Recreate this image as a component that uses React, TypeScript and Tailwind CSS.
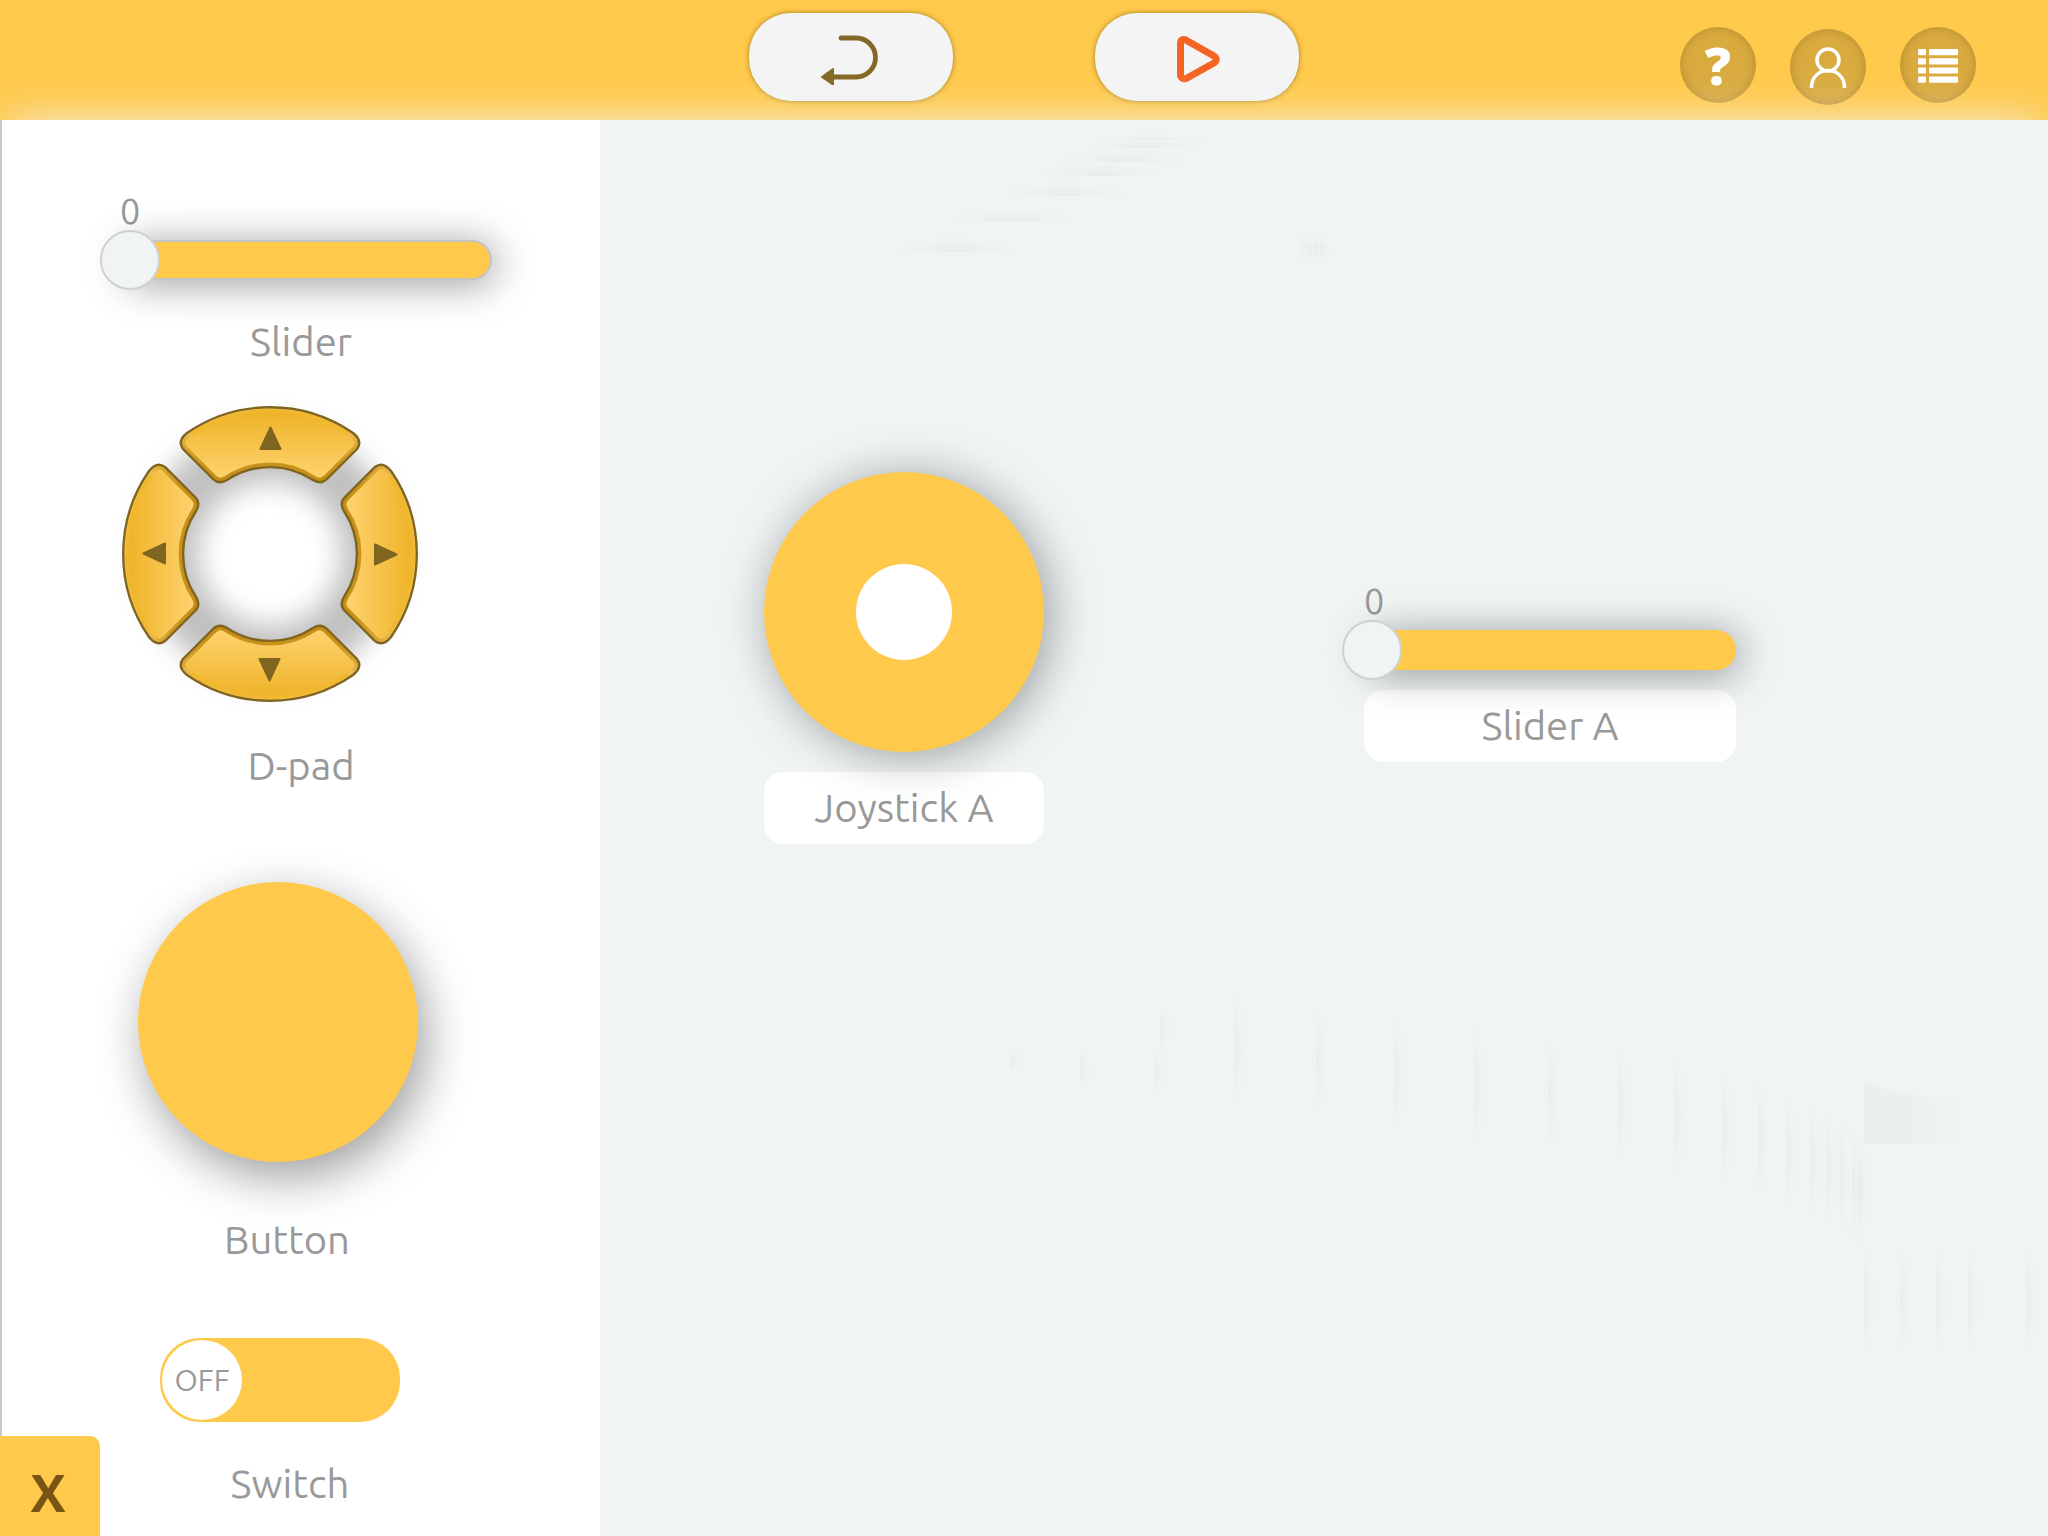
import { useState } from 'react';

interface SliderProps {
    id: string;
    outlined?: boolean;
}

interface DPadKeyProps {
    direction: 'Up' | 'Down' | 'Left' | 'Right';
}

// x, top, bottom of the faint vertical marks on the canvas
const verticalMarks = [
    [410, 930, 953],
    [480, 930, 967],
    [554, 930, 973],
    [560, 885, 936],
    [634, 873, 985],
    [716, 885, 997],
    [794, 897, 1013],
    [874, 905, 1025],
    [948, 916, 1030],
    [1018, 925, 1043],
    [1074, 935, 1055],
    [1122, 948, 1067],
    [1158, 960, 1075],
    [1186, 970, 1090],
    [1210, 983, 1097],
    [1226, 992, 1105],
    [1240, 1000, 1113],
    [1252, 1007, 1120],
    [1258, 1013, 1127],
    [1264, 1123, 1237],
    [1300, 1123, 1237],
    [1336, 1123, 1237],
    [1368, 1123, 1237],
    [1426, 1123, 1237],
    [700, 116, 142],
    [708, 116, 142],
    [714, 116, 142],
    [720, 118, 142],
];

// left, bottom, height of the horizontal ones
const horizontalMarks = [
    [493, 20, 5],
    [482, 28, 9],
    [462, 42, 14],
    [440, 56, 14],
    [404, 76, 14],
    [350, 102, 14],
    [294, 132, 14],
];

const keyPath = 'M7 27 A146.5 146.5 0 0 1 173 27 Q183 35 177 43 L147 73 Q141 79 133 74 A78 78 0 0 0 47 74 Q39 79 33 73 L3 43 Q-3 35 7 27Z';

const keyTransforms = {
    Up: undefined,
    Right: 'translate(77 0) rotate(90)',
    Down: 'translate(180 77) rotate(180)',
    Left: 'translate(0 180) rotate(-90)',
};

const DPadKey = ({ direction }: DPadKeyProps) => {
    const upright = direction === 'Up' || direction === 'Down';
    return (
        <button type="button" aria-label={direction} className="relative block">
            <svg className="block overflow-visible" width={upright ? 180 : 77} height={upright ? 77 : 180}>
                <defs>
                    <linearGradient id={`face${direction}`} x1="0" y1="0" x2="0" y2="1">
                        <stop offset="0.1" stopColor="#efb42a" />
                        <stop offset="1" stopColor="#ffd573" />
                    </linearGradient>
                    <linearGradient id={`rim${direction}`} x1="0" y1="0" x2="0" y2="1">
                        <stop offset="0.2" stopColor="#ffd36a" />
                        <stop offset="0.5" stopColor="#d9a838" />
                        <stop offset="0.75" stopColor="#c9941c" />
                        <stop offset="1" stopColor="#c48c14" />
                    </linearGradient>
                    <clipPath id={`clip${direction}`}>
                        <path d={keyPath} />
                    </clipPath>
                </defs>
                <g transform={keyTransforms[direction]}>
                    <g clipPath={`url(#clip${direction})`}>
                        <path d={keyPath} fill={`url(#face${direction})`} stroke={`url(#rim${direction})`} strokeWidth="9" />
                        <path d="M12 28 A143 143 0 0 1 168 28" fill="none" stroke="#f1b72f" strokeWidth="4" />
                    </g>
                    <path d={keyPath} fill="none" stroke="#806520" strokeWidth="2.400" />
                    <path d="M90.500 21.500 L80.500 43 H100.500Z" fill="#806520" stroke="#806520" strokeWidth="2" strokeLinejoin="round" />
                </g>
            </svg>
        </button>
    );
};

const DPad = () => (
    <div className="relative flex w-[296px] flex-col">
        <div className="absolute inset-[20px] rounded-full border-[56px] border-black/25 blur-[14px]" />
        <div className="flex justify-center">
            <DPadKey direction="Up" />
        </div>
        <div className="-my-[19px] flex justify-between">
            <DPadKey direction="Left" />
            <DPadKey direction="Right" />
        </div>
        <div className="flex justify-center">
            <DPadKey direction="Down" />
        </div>
    </div>
);

const Slider = ({ id, outlined }: SliderProps) => {
    const [value, setValue] = useState(0);
    return (
        <div className="relative flex w-[372px] flex-col gap-[9px]">
            <output htmlFor={id} className="text-[36px] leading-[40px]">
                {value}
            </output>
            <div
                className={`flex h-10 items-center rounded-full bg-[#ffc94b] shadow-[4px_4px_40px_rgba(0,0,0,0.4)] ${outlined ? 'border-2 border-[#c4c4c4]' : ''}`}
            >
                <input
                    id={id}
                    type="range"
                    min={0}
                    max={100}
                    value={value}
                    onChange={(e) => setValue(Number(e.target.value))}
                    className="-mx-[22px] h-[60px] w-[416px] shrink-0 appearance-none bg-transparent [&::-webkit-slider-thumb]:size-[60px] [&::-webkit-slider-thumb]:appearance-none [&::-webkit-slider-thumb]:rounded-full [&::-webkit-slider-thumb]:border-2 [&::-webkit-slider-thumb]:border-solid [&::-webkit-slider-thumb]:border-[#d0d0d0] [&::-webkit-slider-thumb]:bg-[#f0f4f5]"
                />
            </div>
        </div>
    );
};

const Header = () => (
    <header className="grid h-[120px] grid-cols-[1fr_auto_1fr] items-start bg-[#ffc94b]">
        <div />
        <div className="flex gap-[142px] pt-[13px]">
            <button
                type="button"
                aria-label="Back"
                className="flex h-[88px] w-[204px] items-center justify-center rounded-[42px] bg-[#f4f4f4] shadow-[0_0_5px_rgba(100,75,10,0.6)]"
            >
                <svg width="64" height="56" viewBox="0 0 64 56" fill="none" className="text-[#856825]">
                    <path d="M22 9 H37 A19.500 19.500 0 0 1 37 48 H12" stroke="currentColor" strokeWidth="4.800" strokeLinecap="round" />
                    <path d="M3 48 L14 40 V55.500Z" fill="currentColor" stroke="currentColor" strokeWidth="2" strokeLinejoin="round" />
                </svg>
            </button>
            <button
                type="button"
                aria-label="Play"
                className="flex h-[88px] w-[204px] items-center justify-center rounded-[42px] bg-[#f4f4f4] shadow-[0_0_5px_rgba(100,75,10,0.6)]"
            >
                <svg width="46" height="52" viewBox="0 0 46 52" fill="none">
                    <path
                        d="M6.500 13 Q6.500 9 9 8.500 Q11 8 13.500 10 L40 25 Q44.500 28.500 40 32 L14 46.500 Q11 48.500 9 47.500 Q6.500 46.500 6.500 43.500Z"
                        stroke="#f66424"
                        strokeWidth="7"
                        strokeLinejoin="round"
                    />
                </svg>
            </button>
        </div>
        <nav className="flex justify-end gap-[34px] pt-[27px] pr-[72px]">
            <button
                type="button"
                aria-label="Help"
                className="flex size-[76px] items-center justify-center rounded-full bg-black/15 font-['Open_Sans',sans-serif] text-[52px] leading-none font-extrabold text-white shadow-[inset_0_0_10px_rgba(90,60,0,0.3)]"
            >
                ?
            </button>
            <button
                type="button"
                aria-label="Account"
                className="mt-[2px] flex size-[76px] items-center justify-center rounded-full bg-black/15 shadow-[inset_0_0_10px_rgba(90,60,0,0.3)]"
            >
                <svg width="40" height="42" viewBox="0 0 40 42" fill="none" stroke="#fff" strokeWidth="3.500">
                    <circle cx="20" cy="14" r="11" />
                    <path d="M3.400 42 C3.400 31 11 24.500 20 24.500 C29 24.500 36.600 31 36.600 42" />
                </svg>
            </button>
            <button
                type="button"
                aria-label="Menu"
                className="flex size-[76px] items-center justify-center rounded-full bg-black/15 shadow-[inset_0_0_10px_rgba(90,60,0,0.3)]"
            >
                <svg width="40" height="34" viewBox="0 0 40 34" fill="#fff" className="mt-[2px]">
                    {[0, 9.2, 18.4, 27.6].map((y) => (
                        <g key={y}>
                            <rect x="0" y={y} width="8" height="6.200" rx="1" />
                            <rect x="11" y={y} width="29" height="6.200" rx="1" />
                        </g>
                    ))}
                </svg>
            </button>
        </nav>
    </header>
);

const Palette = () => {
    const [on, setOn] = useState(false);
    return (
        <aside className="w-[600px] shrink-0 border-l-2 border-[#c8c8c8] bg-white pt-[71px] pb-[28px]">
            <div className="flex flex-col items-center">
                <div className="ml-[10px]">
                    <Slider id="palette-slider" outlined />
                </div>
                <label htmlFor="palette-slider" className="mt-[38px] text-[40px] leading-[48px]">
                    Slider
                </label>
            </div>
            <div className="mt-10 flex flex-col items-center">
                <div className="mr-[62px]">
                    <DPad />
                </div>
                <p className="mt-10 text-[40px] leading-[48px]">D-pad</p>
            </div>
            <div className="mt-[92px] flex flex-col items-center pr-[28px]">
                <button
                    type="button"
                    aria-labelledby="palette-button"
                    className="mr-[18px] size-[280px] rounded-full bg-[#ffc94b] shadow-[8px_16px_48px_rgba(0,0,0,0.38)]"
                />
                <p id="palette-button" className="mt-[54px] text-[40px] leading-[48px]">
                    Button
                </p>
            </div>
            <div className="mt-[74px] flex flex-col items-center pr-[22px]">
                <div className="relative mr-[20px] h-[84px]">
                    <input
                        id="palette-switch"
                        type="checkbox"
                        role="switch"
                        checked={on}
                        onChange={(e) => setOn(e.target.checked)}
                        className="block h-[84px] w-[240px] appearance-none rounded-[40px] bg-[#ffc94b]"
                    />
                    <span
                        className={`pointer-events-none absolute top-[2px] flex size-[80px] items-center justify-center rounded-full bg-white text-[30px] leading-none ${on ? 'right-[2px]' : 'left-[2px]'}`}
                    >
                        {on ? 'ON' : 'OFF'}
                    </span>
                </div>
                <label htmlFor="palette-switch" className="mt-[38px] text-[40px] leading-[48px]">
                    Switch
                </label>
            </div>
        </aside>
    );
};

const CanvasMarks = () => (
    <svg className="pointer-events-none absolute inset-0 h-full w-full" aria-hidden="true">
        <defs>
            <radialGradient id="markV" cx="0" cy="0.5" r="0.5" gradientTransform="scale(2 1)">
                <stop offset="0" stopColor="#000" stopOpacity="0.03" />
                <stop offset="1" stopColor="#000" stopOpacity="0" />
            </radialGradient>
            <radialGradient id="markH" cx="0.5" cy="0.5" r="0.5" gradientTransform="scale(1 2)">
                <stop offset="0" stopColor="#000" stopOpacity="0.03" />
                <stop offset="1" stopColor="#000" stopOpacity="0" />
            </radialGradient>
            <linearGradient id="markPatch">
                <stop offset="0.4" stopColor="#000" stopOpacity="0.022" />
                <stop offset="1" stopColor="#000" stopOpacity="0" />
            </linearGradient>
        </defs>
        {verticalMarks.map(([x, top, bottom]) => (
            <rect key={`${x}-${top}`} x={x} y={top} width="10" height={bottom - top} fill="url(#markV)" />
        ))}
        {horizontalMarks.map(([x, bottom, height]) => (
            <rect key={bottom} x={x} y={bottom - height} width="122" height={height} fill="url(#markH)" />
        ))}
        <path d="M1264 962 Q1310 980 1364 978 V1024 H1264Z" fill="url(#markPatch)" />
    </svg>
);

const Canvas = () => (
    <main className="relative grow overflow-hidden bg-[#f0f4f5]">
        <CanvasMarks />
        <div className="absolute top-[352px] left-[164px] flex w-[280px] flex-col gap-5">
            <button
                type="button"
                aria-labelledby="joystick-a"
                className="relative flex size-[280px] items-center justify-center rounded-full bg-[#ffc94b] shadow-[6px_4px_48px_rgba(0,0,0,0.36)]"
            >
                <span className="size-[96px] rounded-full bg-white" />
            </button>
            <p id="joystick-a" className="flex h-[72px] items-center justify-center rounded-[20px] bg-white text-[40px] leading-[48px]">
                Joystick A
            </p>
        </div>
        <div className="absolute top-[461px] left-[764px] flex flex-col gap-5">
            <Slider id="slider-a" />
            <label htmlFor="slider-a" className="flex h-[72px] items-center justify-center rounded-[20px] bg-white text-[40px] leading-[48px]">
                Slider A
            </label>
        </div>
    </main>
);

const App = () => {
    return (
        <div className="relative flex min-h-screen flex-col overflow-hidden font-['Ubuntu','Noto_Sans',sans-serif] font-[450] text-[#999999]">
            <Header />
            <div className="relative flex grow shadow-[0_-8px_40px_-8px_rgba(240,244,245,0.85)]">
                <Palette />
                <Canvas />
            </div>
            <button
                type="button"
                aria-label="Close"
                className="absolute bottom-0 left-0 size-[100px] rounded-tr-[10px] bg-[#ffc94b] pt-3 pr-1 font-['Open_Sans',sans-serif] text-[52px] leading-none font-bold text-[#7a5414]"
            >
                X
            </button>
        </div>
    );
};

export default App;
